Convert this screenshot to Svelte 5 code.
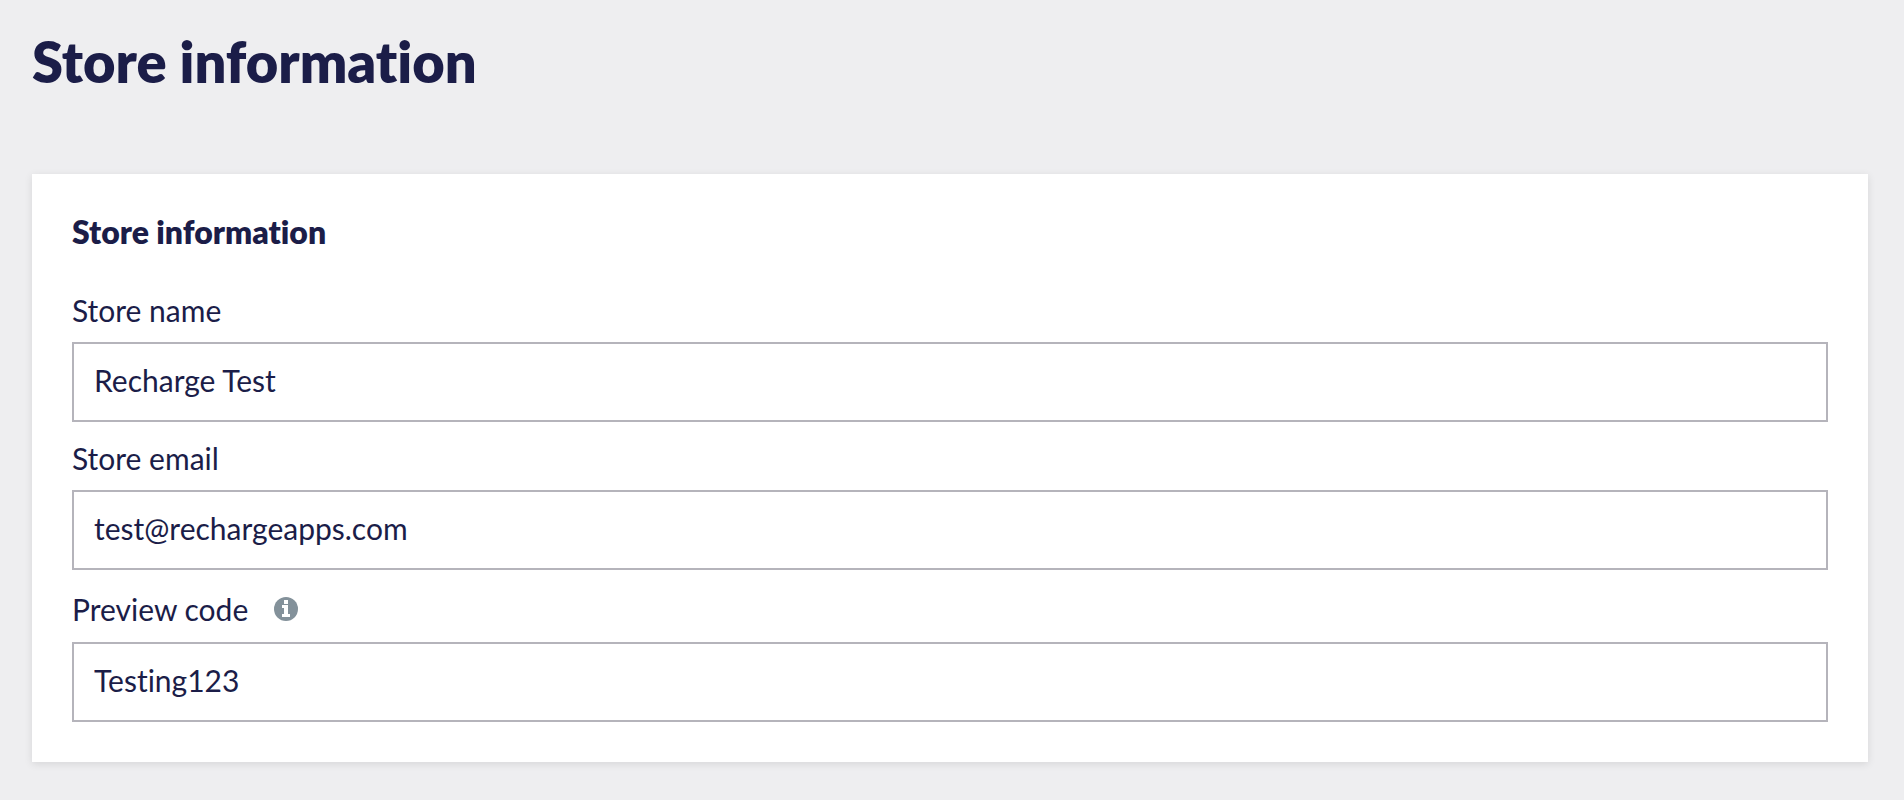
<script>
  let storeName = $state('Recharge Test');
  let storeEmail = $state('test@rechargeapps.com');
  let previewCode = $state('Testing123');
</script>

<main>
  <h1>Store information</h1>
  <section class="card" aria-labelledby="card-title">
    <h2 id="card-title">Store information</h2>
    <div class="field">
      <div class="caption"><label for="store-name">Store name</label></div>
      <input id="store-name" type="text" bind:value={storeName} />
    </div>
    <div class="field">
      <div class="caption"><label for="store-email">Store email</label></div>
      <input id="store-email" type="email" bind:value={storeEmail} />
    </div>
    <div class="field">
      <div class="caption tall">
        <label for="preview-code">Preview code</label>
        <svg class="info" viewBox="0 0 24 24" aria-hidden="true">
          <circle cx="12" cy="12" r="12" fill="#83919a" />
          <path d="M10 3h4v4h-4zM8 8h6v9h2v3H8v-3h2v-6H8z" fill="#fff" />
        </svg>
      </div>
      <input id="preview-code" type="text" bind:value={previewCode} />
    </div>
  </section>
</main>

<style>
  :global(body) {
    background: #eeeef0;
  }

  main {
    padding: 30px 36px 38px 32px;
    color: #1b1d48;
    font-family: Lato, sans-serif;
    font-variant-ligatures: none;
  }

  h1 {
    margin: 0 0 80px;
    font-size: 56px;
    line-height: 64px;
    font-weight: 800;
  }

  .card {
    padding: 38px 40px 40px;
    background: #fff;
    box-shadow: 0 2px 8px rgba(0, 0, 0, 0.1);
  }

  h2 {
    margin: 0 0 22px;
    font-size: 32px;
    line-height: 40px;
    font-weight: 800;
  }

  .caption {
    display: flex;
    align-items: center;
    gap: 26px;
    height: 68px;
    padding-top: 4px;
    box-sizing: border-box;
    font-size: 30px;
    line-height: 36px;
  }

  .caption.tall {
    height: 72px;
    padding-top: 6px;
  }

  .info {
    width: 24px;
    height: 24px;
  }

  input {
    display: block;
    width: 100%;
    height: 80px;
    box-sizing: border-box;
    padding: 0 20px 4px;
    border: 2px solid #b5b4bb;
    border-radius: 0;
    outline: none;
    background: #fff;
    color: inherit;
    font-family: inherit;
    font-size: 30px;
    font-variant-ligatures: none;
  }

  input:focus {
    border-color: #1b1d48;
  }
</style>
